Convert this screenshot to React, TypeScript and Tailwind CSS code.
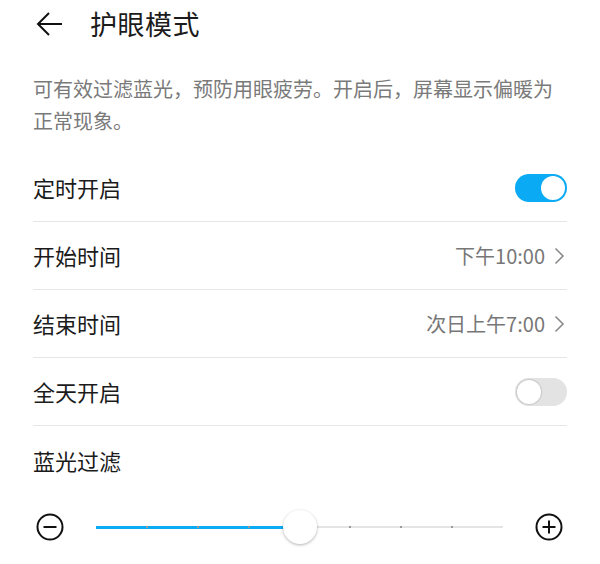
import { useState } from "react";

const cjk = { fontFamily: '"Noto Sans CJK SC", "Noto Sans", sans-serif' };

function Toggle({ on, onChange }: { on: boolean; onChange: () => void }) {
  return (
    <button
      onClick={onChange}
      className={`relative h-[28px] w-[52px] rounded-full ${on ? "bg-[#0aaaf4]" : "bg-[#e3e3e3]"}`}
    >
      <span
        className={`absolute top-[2px] h-[24px] w-[24px] rounded-full bg-white ${
          on ? "left-[26px]" : "left-[2px] shadow-[0_0_1px_1px_rgba(0,0,0,0.12)]"
        }`}
      />
    </button>
  );
}

function Chevron() {
  return (
    <svg width="12" height="18" viewBox="0 0 12 18" className="ml-[8px] mr-[2px]">
      <path d="M2.5 1.5 L10 9 L2.5 16.5" fill="none" stroke="#8a8a8a" strokeWidth="1.6" />
    </svg>
  );
}

function Row({ label, children, line = true }: { label: string; children?: React.ReactNode; line?: boolean }) {
  return (
    <div className={`flex h-[68px] items-center justify-between ${line ? "border-b border-[#e6e6e6]" : ""}`}>
      <span className="text-[22px] text-[#1b1b1b]">{label}</span>
      {children}
    </div>
  );
}

function RoundIcon({ plus }: { plus?: boolean }) {
  return (
    <svg width="28" height="28" viewBox="0 0 28 28">
      <circle cx="14" cy="14" r="12.5" fill="none" stroke="#111" strokeWidth="2" />
      <path d="M7.5 14 H20.5" stroke="#111" strokeWidth="2" />
      {plus && <path d="M14 7.5 V20.5" stroke="#111" strokeWidth="2" />}
    </svg>
  );
}

const STEPS = 8;

export default function App() {
  const [timed, setTimed] = useState(true);
  const [allDay, setAllDay] = useState(false);
  const [level, setLevel] = useState(4);
  const pct = (level / STEPS) * 100;

  return (
    <div className="h-[564px] w-[600px] overflow-hidden bg-white" style={cjk}>
      <div className="flex h-[48px] items-center pl-[36px]">
        <svg width="28" height="26" viewBox="0 0 28 26">
          <path d="M26 13 H3 M13 2 L2 13 L13 24" fill="none" stroke="#111" strokeWidth="2" />
        </svg>
        <h1 className="ml-[26px] text-[27px] tracking-[0.5px] text-[#1b1b1b]">护眼模式</h1>
      </div>

      <div className="px-[33px]">
        <p className="mt-[25px] text-[20px] leading-[32px] text-[#7a7a7a]">
          可有效过滤蓝光，预防用眼疲劳。开启后，屏幕显示偏暖为正常现象。
        </p>

        <div className="mt-[17px]">
          <Row label="定时开启">
            <Toggle on={timed} onChange={() => setTimed(!timed)} />
          </Row>
          <Row label="开始时间">
            <span className="flex items-center text-[20px] text-[#777]">
              下午10:00
              <Chevron />
            </span>
          </Row>
          <Row label="结束时间">
            <span className="flex items-center text-[20px] text-[#777]">
              次日上午7:00
              <Chevron />
            </span>
          </Row>
          <Row label="全天开启">
            <Toggle on={allDay} onChange={() => setAllDay(!allDay)} />
          </Row>
          <Row label="蓝光过滤" line={false} />
        </div>

        <div className="flex h-[66px] items-center">
          <button onClick={() => setLevel(Math.max(0, level - 1))} className="ml-[3px]">
            <RoundIcon />
          </button>
          <div className="relative mx-[32px] h-[34px] flex-1">
            <div className="absolute left-0 right-0 top-[16px] h-[2px] bg-[#e4e4e4]" />
            <div className="absolute left-0 top-[15.5px] h-[3px] bg-[#0aaaf4]" style={{ width: `${pct}%` }} />
            {Array.from({ length: STEPS - 1 }, (_, i) => (
              <span
                key={i}
                className="absolute top-[16px] h-[2px] w-[2px] bg-[#9a9a9a]"
                style={{ left: `calc(${((i + 1) / STEPS) * 100}% - 1px)` }}
              />
            ))}
            <span
              className="absolute top-0 h-[34px] w-[34px] rounded-full bg-white shadow-[0_1px_3px_rgba(0,0,0,0.3)]"
              style={{ left: `calc(${pct}% - 17px)` }}
            />
          </div>
          <button onClick={() => setLevel(Math.min(STEPS, level + 1))} className="mr-[4px]">
            <RoundIcon plus />
          </button>
        </div>
      </div>
    </div>
  );
}
